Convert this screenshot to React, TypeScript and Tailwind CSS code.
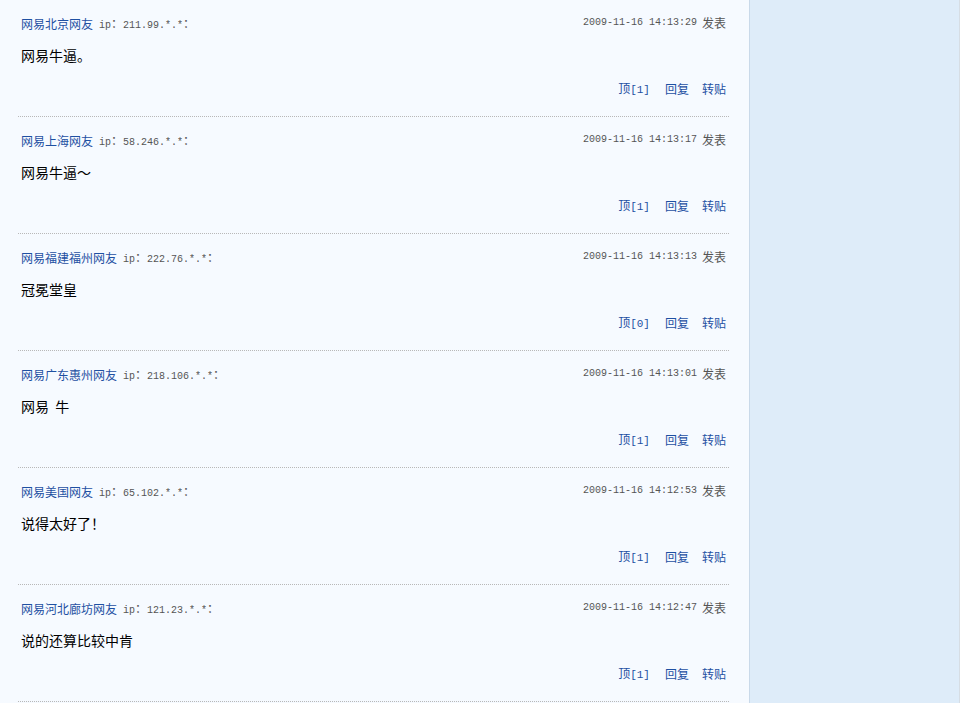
import React from "react";

type Item = { name: string; ip: string; time: string; text: string; up: number };

const items: Item[] = [
  { name: "网易北京网友", ip: "211.99.*.*", time: "2009-11-16 14:13:29", text: "网易牛逼。", up: 1 },
  { name: "网易上海网友", ip: "58.246.*.*", time: "2009-11-16 14:13:17", text: "网易牛逼～", up: 1 },
  { name: "网易福建福州网友", ip: "222.76.*.*", time: "2009-11-16 14:13:13", text: "冠冕堂皇", up: 0 },
  { name: "网易广东惠州网友", ip: "218.106.*.*", time: "2009-11-16 14:13:01", text: "网易  牛", up: 1 },
  { name: "网易美国网友", ip: "65.102.*.*", time: "2009-11-16 14:12:53", text: "说得太好了！", up: 1 },
  { name: "网易河北廊坊网友", ip: "121.23.*.*", time: "2009-11-16 14:12:47", text: "说的还算比较中肯", up: 1 },
];

const cjk = { fontFamily: '"Noto Sans CJK SC", "Noto Sans", sans-serif' };
const mono = { fontFamily: '"Liberation Mono", "Noto Sans CJK SC", monospace' };

function Row({ it }: { it: Item }) {
  return (
    <div className="ml-[18px] w-[711px] h-[117px] box-border border-b border-dotted border-[#b8b8b8] px-[3px] pt-[17px]">
      <div className="flex justify-between items-center h-[14px]">
        <div className="flex items-center whitespace-nowrap">
          <span className="text-[12px] leading-[14px] text-[#1e50a2]" style={cjk}>{it.name}</span>
          <span className="ml-[6px] text-[10px] leading-[14px] text-[#555]" style={mono}>
            ip<span style={cjk} className="text-[12px]">：</span>{it.ip}<span style={cjk} className="text-[12px]">：</span>
          </span>
        </div>
        <div className="flex items-center whitespace-nowrap -mt-[2px]">
          <span className="text-[10px] leading-[14px] text-[#555]" style={mono}>{it.time}</span>
          <span className="ml-[5px] text-[12px] leading-[14px] text-[#555]" style={cjk}>发表</span>
        </div>
      </div>
      <div className="mt-[14px] h-[20px] text-[14px] leading-[20px] text-black whitespace-pre" style={cjk}>{it.text}</div>
      <div className="mt-[17px] flex justify-end items-center h-[14px] text-[12px] leading-[14px] text-[#1e50a2]" style={cjk}>
        <span className="mr-[15px]">顶<span style={mono} className="text-[11px]">[{it.up}]</span></span>
        <span className="mr-[13px]">回复</span>
        <span>转贴</span>
      </div>
    </div>
  );
}

export default function App() {
  return (
    <div className="w-[960px] h-[703px] flex overflow-hidden bg-[#f5f9fd]">
      <div className="w-[749px] h-full bg-[#f6faff]">
        {items.map((it, i) => (
          <Row key={i} it={it} />
        ))}
      </div>
      <div className="w-[210px] h-full bg-[#deecf9] border-l border-[#c9d9e9]" />
      <div className="w-[1px] h-full bg-[#d6dde4]" />
    </div>
  );
}
